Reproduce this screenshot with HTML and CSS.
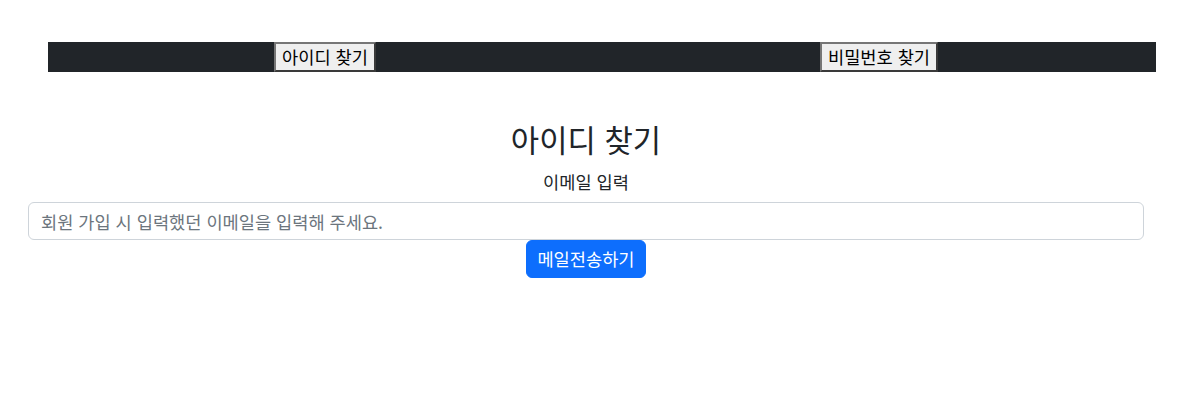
FILE: index.html
```html
<!DOCTYPE html>
<html lang="ko">
<head>
<meta charset="utf-8">
<title>아이디 찾기</title>
<link rel="stylesheet" href="styles.css">
</head>
<body>
<nav class="tabs">
  <div class="tab-cell"><button class="tab-btn" type="button">아이디 찾기</button></div>
  <div class="tab-cell"><button class="tab-btn" type="button">비밀번호 찾기</button></div>
</nav>
<main class="panel">
  <h3 class="title">아이디 찾기</h3>
  <label class="field-label" for="email">이메일 입력</label>
  <input class="field" id="email" type="email" placeholder="회원 가입 시 입력했던 이메일을 입력해 주세요.">
  <div class="actions"><button class="send-btn" type="button">메일전송하기</button></div>
</main>
</body>
</html>
```

FILE: styles.css
```css
* { box-sizing: border-box; }
html, body { margin: 0; padding: 0; background: #fff; }
body {
  font-family: "Noto Sans CJK KR", "Noto Sans", sans-serif;
  color: #212529;
  font-size: 17.6px;
  line-height: 24px;
}
.tabs {
  margin: 42px 48px 0;
  background: #212529;
  display: grid;
  grid-template-columns: 1fr 1fr;
}
.tab-cell { display: flex; justify-content: center; }
.tab-btn {
  font-family: "Noto Sans CJK KR", sans-serif;
  font-size: 17.6px;
  line-height: 26px;
  height: 30px;
  padding: 0 6px;
  margin: 0;
  background: #efefef;
  color: #000;
  border-style: solid;
  border-width: 2px;
  border-color: #767676 #3a3a3a #3a3a3a #767676;
}
.panel { padding: 0 60px 0 28px; }
.title {
  margin: 50px 0 0;
  text-align: center;
  font-size: 30.8px;
  line-height: 34px;
  font-weight: 400;
}
.field-label {
  display: block;
  text-align: center;
  margin: 14px 0 8px;
  line-height: 24px;
}
.field {
  display: block;
  width: 100%;
  height: 38px;
  padding: 6px 12px;
  font-family: "Noto Sans CJK KR", sans-serif;
  font-size: 17.6px;
  color: #212529;
  border: 1px solid #ced4da;
  border-radius: 6px;
  outline: none;
}
.field::placeholder { color: #6c757d; }
.actions { display: flex; justify-content: center; }
.send-btn {
  font-family: "Noto Sans CJK KR", sans-serif;
  font-size: 17.6px;
  line-height: 24px;
  height: 38px;
  padding: 6px 10px;
  background: #0d6efd;
  color: #fff;
  border: 1px solid #0d6efd;
  border-radius: 6px;
}
```
